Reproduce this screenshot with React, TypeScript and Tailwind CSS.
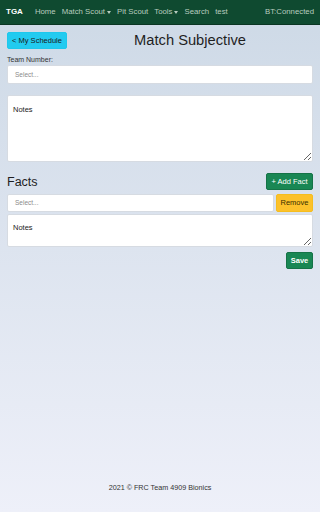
function Caret() {
  return (
    <span className="ml-[2px] inline-block h-0 w-0 border-x-[2.5px] border-t-[3px] border-x-transparent border-t-current align-middle" />
  );
}

export default function App() {
  const links = [
    { label: "Home" },
    { label: "Match Scout", caret: true },
    { label: "Pit Scout" },
    { label: "Tools", caret: true },
    { label: "Search" },
    { label: "test" },
  ];

  return (
    <div
      className="flex min-h-[512px] flex-col bg-gradient-to-b from-[#cdd9e6] to-[#eef0f9] text-[#212529]"
      style={{ fontFamily: '"Liberation Sans", Arial, sans-serif' }}
    >
      {/* Navbar */}
      <nav className="flex h-[25px] items-center border-b border-[#0a3522] bg-[#0f4a30] px-[6px]">
        <span className="mr-[12px] text-[8px] font-bold text-white">TGA</span>
        <div className="flex items-center gap-[6px] text-[7.8px] text-[#b8ccbf]">
          {links.map((l) => (
            <span key={l.label} className="flex items-center">
              {l.label}
              {l.caret && <Caret />}
            </span>
          ))}
        </div>
        <span className="ml-auto text-[7.8px] text-[#b8ccbf]">BT:Connected</span>
      </nav>

      <main className="px-[7px]">
        {/* Header row */}
        <div className="mt-[7px] flex items-center">
          <button className="h-[17px] w-[60px] rounded-[2px] border border-[#1ec8ec] bg-[#22cbf0] text-[7.5px] text-[#1a1a1a]">
            &lt; My Schedule
          </button>
          <h1 className="flex-1 text-center text-[14.7px] leading-[17px] text-[#1f1f1f]">Match Subjective</h1>
        </div>

        {/* Team number */}
        <label className="mt-[6px] block text-[7px] leading-[9px] text-[#333]">Team Number:</label>
        <div className="mt-[1px] flex h-[19px] items-center rounded-[2px] border border-[#d6dbe2] bg-white px-[7px] text-[6.5px] text-[#8a8a8a]">
          Select...
        </div>

        <textarea
          className="mt-[11px] block h-[67px] w-full resize-y rounded-[2px] border border-[#d6dbe2] bg-white px-[5px] py-[8px] text-[7.5px] text-[#222] outline-none"
          defaultValue="Notes"
        />

        {/* Facts */}
        <div className="mt-[11px] flex items-center justify-between">
          <h2 className="pt-[2px] text-[12.5px] leading-[15px] text-[#1f1f1f]">Facts</h2>
          <button className="h-[17px] w-[47px] rounded-[2px] border border-[#157347] bg-[#198754] text-[7.5px] font-medium text-white">
            + Add Fact
          </button>
        </div>

        <div className="mt-[4px] flex gap-[2px]">
          <div className="flex h-[18px] flex-1 items-center rounded-[2px] border border-[#d6dbe2] bg-white px-[7px] text-[6.5px] text-[#8a8a8a]">
            Select...
          </div>
          <button className="h-[18px] w-[37px] rounded-[2px] border border-[#f5bd1f] bg-[#fcc12b] text-[7.5px] text-[#3a3000]">
            Remove
          </button>
        </div>

        <textarea
          className="mt-[2px] block h-[33px] w-full resize-y rounded-[2px] border border-[#d6dbe2] bg-white px-[5px] py-[7px] text-[7.5px] text-[#222] outline-none"
          defaultValue="Notes"
        />

        <div className="mt-[5px] flex justify-end">
          <button className="h-[17px] w-[27px] rounded-[2px] border border-[#157347] bg-[#198754] text-[7.5px] font-bold text-white">
            Save
          </button>
        </div>
      </main>

      <footer className="mt-auto pb-[18px] text-center text-[7.2px] text-[#333]">
        2021 © FRC Team 4909 Bionics
      </footer>
    </div>
  );
}
